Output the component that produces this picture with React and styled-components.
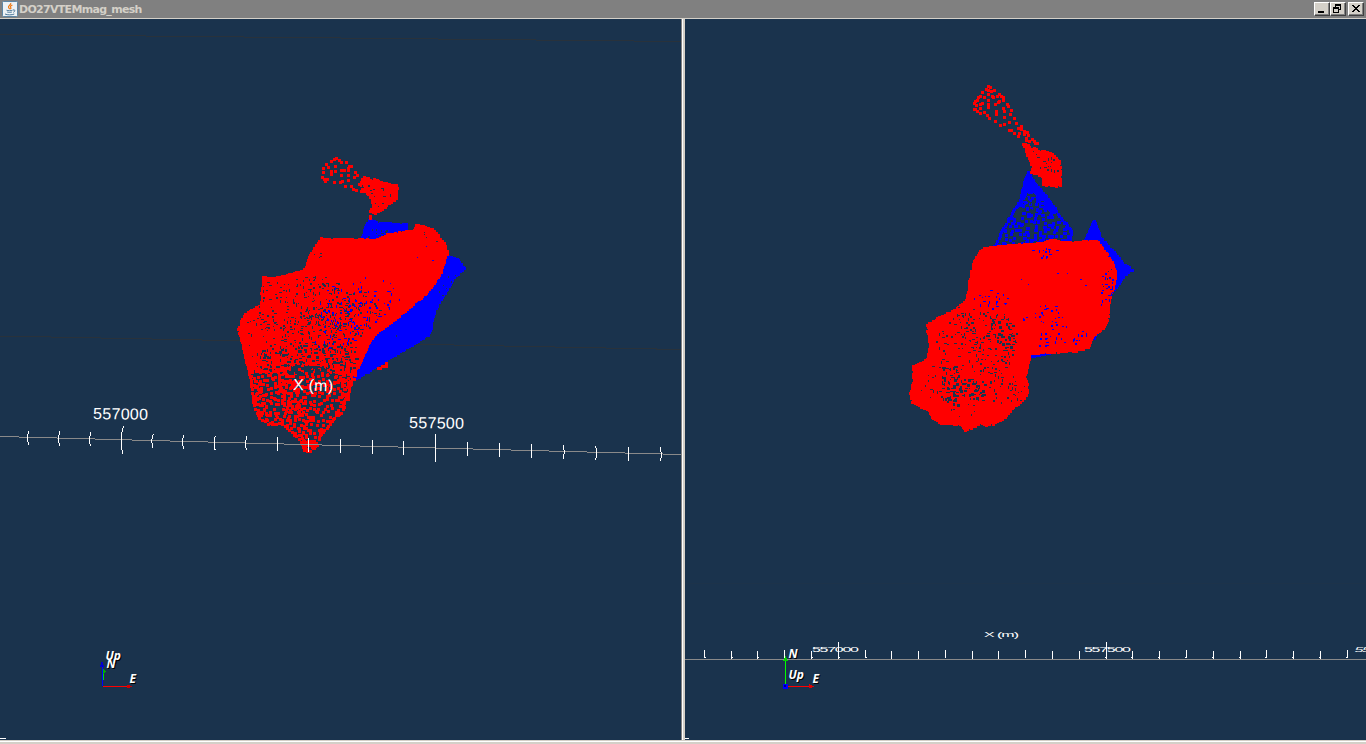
import React from 'react';
import styled, { createGlobalStyle } from 'styled-components';

const RED = '#ff0000';
const BLUE = '#0000ff';
const BACK = '#1a334d';

const Global = createGlobalStyle`
  html, body { margin: 0; padding: 0; }
  body { background: #d4d0c8; overflow: hidden; }
`;
const Window = styled.div`
  display: flex;
  flex-direction: column;
  width: 1366px;
  height: 744px;
  background: #d4d0c8;
`;
const TitleBar = styled.header`
  display: flex;
  align-items: center;
  height: 18px;
  box-sizing: border-box;
  padding: 0 2px;
  background: #808080;
`;
const AppIcon = styled.svg`
  width: 16px;
  height: 16px;
  flex: none;
`;
const Title = styled.span`
  flex: 1;
  padding: 1px 0 0 1px;
  font: bold 11px/17px 'DejaVu Sans', sans-serif;
  letter-spacing: ${(p) => p.$tracking}px;
  color: #d4d0c8;
`;
const Controls = styled.div`
  display: flex;
`;
const ControlButton = styled.button`
  width: 16px;
  height: 14px;
  padding: 0;
  margin-left: ${(p) => (p.$gap ? 2 : 0)}px;
  border: 1px solid;
  border-color: #fff #404040 #404040 #fff;
  box-shadow: inset -1px -1px 0 #808080;
  background: #d4d0c8;
  display: flex;
  svg { display: block; width: 14px; height: 12px; }
`;
const Split = styled.main`
  display: flex;
  height: 721px;
  margin-top: 1px;
`;
const Scene = styled.svg`
  display: block;
  width: 681px;
  height: 721px;
  background: ${BACK};
  flex: none;
`;
const Divider = styled.div`
  width: 4px;
  box-sizing: border-box;
  background: #d4d0c8;
  border-left: 1px solid #808080;
  box-shadow: inset 1px 0 0 #fff;
`;
const Footer = styled.div`
  height: 4px;
  box-sizing: border-box;
  border-top: 1px solid #d4d0c8;
  box-shadow: inset 0 1px 0 #fff;
`;
const AxisText = styled.text`
  font-family: 'Liberation Sans', sans-serif;
  font-size: 16px;
  fill: #fff;
`;
const CompassText = styled.text`
  font: italic bold 12px 'Open Sans', sans-serif;
  fill: #fff;
  text-shadow: 1px 1px 0 #000;
`;

// Outlines are stored in thirds of a pixel, relative to a local origin.
const local = (ox, oy, s) =>
  s.trim().split(/\s+/).map((p) => {
    const [x, y] = p.split(',').map(Number);
    return [ox + x / 3, oy + y / 3];
  });

const random = (seed) => () => {
  seed = (seed + 0x6d2b79f5) | 0;
  let t = Math.imul(seed ^ (seed >>> 15), 1 | seed);
  t = (t + Math.imul(t ^ (t >>> 7), 61 | t)) ^ t;
  return ((t ^ (t >>> 14)) >>> 0) / 4294967296;
};

const inside = (x, y, poly) => {
  let hit = false;
  for (let i = 0, j = poly.length - 1; i < poly.length; j = i++) {
    const [a, b] = poly[i];
    const [c, d] = poly[j];
    if (b > y !== d > y && x < ((c - a) * (y - b)) / (d - b) + a) hit = !hit;
  }
  return hit;
};

const square = (x, y, w, h = w) => `M${x} ${y}h${w}v${h}h${-w}z`;

// Vertices drawn as square points along and around an outline.
const edgePath = (poly, seed, gap = 2.6, open = false) => {
  const r = random(seed);
  let d = '';
  poly.forEach(([x, y], i) => {
    if (open && i === poly.length - 1) return;
    const [u, v] = poly[(i + 1) % poly.length];
    const n = Math.max(1, Math.round(Math.hypot(u - x, v - y) / gap));
    for (let k = 0; k < n; k++) {
      const px = x + ((u - x) * k) / n + (r() - 0.5);
      const py = y + ((v - y) * k) / n + (r() - 0.5);
      d += square(Math.floor(px) - 1, Math.floor(py) - 1, 3);
    }
  });
  return d;
};

// Jittered cells filling a polygon.
const scatter = (poly, { seed, step, chance, sizes }) => {
  const r = random(seed);
  const xs = poly.map((p) => p[0]);
  const ys = poly.map((p) => p[1]);
  let d = '';
  for (let y = Math.min(...ys); y < Math.max(...ys); y += step)
    for (let x = Math.min(...xs); x < Math.max(...xs); x += step) {
      const px = Math.round(x + r() * step * 0.8);
      const py = Math.round(y + r() * step * 0.8);
      const [w, h] = sizes[Math.floor(r() * sizes.length)];
      if (r() < chance && inside(px, py, poly)) d += square(px, py, w, h);
    }
  return d;
};

const Solid = ({ poly, color, seed = 1, edge = true }) => (
  <g fill={color}>
    <polygon points={poly.map((p) => p.join(',')).join(' ')} />
    {edge && <path d={edgePath(poly, seed)} />}
  </g>
);
const Points = ({ at, color }) => (
  <path fill={color} d={at.map(([x, y]) => square(Math.floor(x) - 1, Math.floor(y) - 1, 3)).join('')} />
);
const Speckle = ({ poly, color, ...opts }) => <path fill={color} d={scatter(poly, opts)} />;

const FINE = [[1, 1], [1, 2], [2, 1]];
const MID = [[1, 1], [1, 2], [2, 1], [2, 2], [1, 3], [3, 1]];
const COARSE = [[2, 2], [3, 1], [1, 3], [3, 2], [2, 3], [3, 3], [4, 2]];
const POINT = [[3, 3]];

const A = (s) => local(220, 140, s);
const B = (s) => local(220, 300, s);
const C = (s) => local(890, 70, s);
const D = (s) => local(890, 240, s);

const leftBody = [
  ...A('590,256 610,260 638,271 658,292 672,312 683,335 677,352 671,375 659,405 642,430 620,460 597,478 580,492'),
  ...B('550,38 503,76 466,103 445,132 425,180 404,220 350,218 320,195 230,190 180,215 90,215 79,180 64,115 56,90 69,58 84,38 103,28 126,14'),
  ...A('129,413 165,417 202,406 253,395 265,362 278,332 305,298 375,300 465,300 512,282 552,278 585,272'),
];
const leftFoot = B('84,205 180,205 230,185 320,185 350,210 406,210 402,228 388,265 377,300 364,338 346,350 326,374 306,398 294,420 284,438 272,450 256,452 243,425 217,398 187,370 145,370 119,356 104,318 96,260');
const leftFootRim = B('88,205 96,260 104,318 119,358 145,372 187,372 217,398 243,425 256,452 272,452 286,438 296,420 308,398 332,372 350,348 366,338 379,300 390,265 402,228');
const leftTail = A('350,55 335,65 342,58 358,60 320,73 310,84 325,82 345,80 310,97 333,95 347,94 308,112 312,118 322,118 316,125 333,104 343,127 363,105 360,128 368,124 385,105 376,139 386,122 395,138 400,148 408,152 403,112 411,105 405,97 395,80 388,80 378,68 363,66 386,84 386,92 365,90 372,90 418,133 424,154 452,230 452,236');
const leftHook = A('432,114 445,118 470,122 500,132 530,136 530,176 508,190 488,208 468,220 453,216 461,200 457,180 447,165 440,152 424,154 434,142 420,132');
const leftBlueTop = A('446,242 480,249 559,256 556,285 500,300 427,295 436,262');
const leftBlueSide = [...A('670,346 686,350 711,358 733,386 703,413 676,460 650,500'), ...B('654,10 638,55 628,106 616,111 548,152 498,182 412,236 400,230 440,100 590,0')];

const rightBody = D('285,26 310,23 350,18 420,13 450,11 490,2 550,10 610,3 626,8 635,22 653,46 669,75 678,101 674,130 662,165 655,200 653,240 640,266 610,286 595,323 560,333 480,337 422,342 412,375 404,410 414,450 409,468 390,487 365,508 345,532 309,553 290,555 270,550 228,573 217,555 155,550 130,537 118,512 68,486 61,460 71,430 71,380 113,359 120,320 113,257 150,233 195,211 231,183 243,110 253,65 272,34');
const rightTail = C('295,50 290,57 302,52 296,61 277,68 305,64 314,62 265,82 271,79 283,82 295,73 307,79 311,83 328,73 321,79 333,79 340,82 340,91 262,91 256,95 253,101 259,107 271,103 277,100 295,91 295,103 295,112 316,103 325,97 329,94 352,103 355,109 364,121 340,115 344,125 361,133 253,119 256,117 262,125 271,115 271,130 283,127 292,136 298,145 319,125 319,133 316,154 331,166 343,142 343,163 358,157 373,145 379,160 358,181 364,181 373,190 385,199 385,175 394,170 394,178 388,190 403,184 403,193 412,187 415,196 409,205 409,211 418,214 427,208 434,214 442,220 436,220 434,235');
const rightHook = C('401,223 415,226 420,240 434,238 448,243 465,245 488,256 509,275 511,346 500,348 460,343 457,318 440,311 424,308 430,290 418,265 407,240');
const rightBlueTop = C('416,310 425,325 440,347 470,382 496,416 508,440 530,462 545,485 540,510 543,530 315,530 326,508 338,482 353,457 367,432 387,402 398,370 406,330');
const rightPeak = C('612,452 620,472 630,498 640,516 660,538 580,525 600,485');
const rightBlueSide = D('630,4 645,8 662,26 698,70 726,90 702,106 688,131 673,150 660,60');

const Tick = ({ x, major }) => {
  const y = 437 + x * 0.0264;
  const h = major ? 14 : 7;
  const b = x < 270 ? 1.5 + (major ? 1 : 0) : x > 550 ? -1 : 0;
  return <path fill="none" stroke="#fff" d={`M${x + b} ${y - h}L${x} ${y - h / 4}V${y + h / 4}L${x + b * 0.7} ${y + h}`} />;
};
const leftTicks = [27.5, 58.5, 89.5, 121, 151.9, 182.5, 214, 245.5, 277.5, 308.5, 340.5, 372.5, 403.5, 435.5, 467.5, 499.5, 531.5, 564, 596.5, 628.9, 661.2];

const Compass = ({ children }) => <g>{children}</g>;

const LeftScene = () => (
  <Scene viewBox="0 19 681 721" shapeRendering="crispEdges">
    <path d="M0 34.5L681 41.5M0 336L681 349.5" stroke="#29323b" fill="none" />
    <Solid poly={leftBlueTop} color={BLUE} seed={4} />
    <Speckle poly={A('455,263 550,265 535,280 470,300 435,290')} color={BACK} seed={7} step={3} chance={0.7} sizes={MID} />
    <Solid poly={leftBlueSide} color={BLUE} seed={5} />
    <Speckle poly={A('685,390 708,405 665,475 640,460')} color={BACK} seed={8} step={4} chance={0.45} sizes={FINE} />
    <Speckle poly={B('490,105 600,88 600,105 500,120')} color={BACK} seed={8} step={4} chance={0.25} sizes={FINE} />
    <Points at={B('475,204 482,204 488,200 494,198 500,198 500,190')} color={RED} />
    <Solid poly={leftBody} color={RED} seed={2} />
    <Speckle poly={leftFoot} color={RED} seed={71} step={4} chance={0.82} sizes={POINT} />
    <path d={edgePath(leftFootRim, 72, 3.2, true)} fill={RED} />
    <Speckle poly={B('88,205 112,205 125,300 150,372 119,356 104,318')} color={RED} seed={73} step={3.2} chance={0.6} sizes={POINT} />
    <Speckle poly={B('140,205 215,205 245,340 290,430 272,450 256,452 200,350')} color={RED} seed={74} step={3.2} chance={0.6} sizes={POINT} />
    <Speckle poly={B('320,205 404,205 380,300 364,338 345,260')} color={RED} seed={75} step={3.2} chance={0.5} sizes={POINT} />
    <Speckle poly={A('132,425 245,405 330,410 430,450 490,520 410,600 300,600 95,550')} color={BACK} seed={21} step={3.3} chance={0.34} sizes={MID} />
    <Speckle poly={A('265,430 330,430 390,470 380,560 310,570 250,510')} color={BACK} seed={22} step={3.5} chance={0.48} sizes={MID} />
    <Speckle poly={B('75,65 130,45 310,40 410,60 405,180 340,220 120,215 90,180')} color={BACK} seed={23} step={3.4} chance={0.38} sizes={MID} />
    <Speckle poly={B('115,145 350,120 400,165 385,215 100,215')} color={BACK} seed={24} step={3.9} chance={0.5} sizes={COARSE} />
    <Speckle poly={B('385,125 415,130 410,180 385,230')} color={BACK} seed={27} step={4} chance={0.6} sizes={COARSE} />
    <Speckle poly={A('320,430 430,400 520,430 550,500 430,560 395,620 315,650 290,530')} color={BLUE} seed={31} step={4} chance={0.27} sizes={MID} />
    <Speckle poly={B('300,0 530,0 480,75 420,130 340,130 270,170 290,60')} color={BLUE} seed={32} step={4} chance={0.27} sizes={MID} />
    <Speckle poly={A('455,310 550,295 665,320 650,370 500,350')} color={BLUE} seed={33} step={7} chance={0.2} sizes={FINE} />
    <Speckle poly={A('275,340 305,335 300,370 275,365')} color={BACK} seed={34} step={4} chance={0.45} sizes={FINE} />
    <Speckle poly={A('600,265 650,285 670,325 640,325')} color={BACK} seed={36} step={5} chance={0.35} sizes={FINE} />
    <Points at={leftTail} color={RED} />
    <Solid poly={leftHook} color={RED} seed={6} />
    <Speckle poly={A('425,120 510,140 515,170 480,205 460,190 445,160 420,150')} color={BACK} seed={35} step={3.6} chance={0.34} sizes={MID} />
    <path d="M0 436.5L681 454.5" stroke="#8a8a8a" fill="none" />
    {leftTicks.map((x) => <Tick key={x} x={x} major={x === 121 || x === 435.5} />)}
    <AxisText x="93" y="419" textLength="55" transform="rotate(0.8 93 419)">557000</AxisText>
    <AxisText x="409" y="428" textLength="55" transform="rotate(0.8 409 428)">557500</AxisText>
    <AxisText x="293" y="390" textLength="40" transform="rotate(1.8 293 390)">X (m)</AxisText>
    <Compass>
      <path d="M103.5 671V680" stroke="#00e000" />
      <path d="M103 669l3 3-3 2z" fill="#00b000" />
      <path d="M102.5 664V686" stroke={BLUE} />
      <path d="M102 661l2.5 6h-5z" fill="#0000d0" />
      <path d="M103 686.5H128" stroke={RED} />
      <path d="M127 684.5l5 2-5 2z" fill="#d00000" />
      <CompassText x="105.5" y="660">Up</CompassText>
      <CompassText x="106.5" y="668">N</CompassText>
      <CompassText x="129.5" y="683">E</CompassText>
    </Compass>
    <path d="M0 738.5H6" stroke="#fff" />
  </Scene>
);

const rightTicks = Array.from({ length: 25 }, (_, i) => Math.floor(704.4 + i * 26.78));

const RightScene = () => (
  <Scene viewBox="685 19 681 721" shapeRendering="crispEdges">
    <path d="M685 583.5H1366" stroke="#1d334a" />
    <Speckle poly={rightBlueTop} color={BLUE} seed={41} step={4.2} chance={0.76} sizes={[[3, 3], [3, 3], [3, 4], [4, 3]]} />
    <path d={edgePath(rightBlueTop, 3)} fill={BLUE} />
    <Solid poly={C('415,312 440,348 480,395 493,428 455,410 440,375 415,350 395,395 387,408 400,365')} color={BLUE} seed={9} />
    <Speckle poly={C('400,355 470,385 480,420 390,420')} color={BACK} seed={42} step={4} chance={0.5} sizes={MID} />
    <Solid poly={rightPeak} color={BLUE} seed={10} />
    <Solid poly={rightBlueSide} color={BLUE} seed={11} />
    <Solid poly={D('422,340 490,336 480,340 440,348 424,349')} color={BLUE} seed={12} />
    <Solid poly={D('610,285 620,282 614,295')} color={BLUE} seed={13} />
    <Solid poly={rightBody} color={RED} seed={14} />
    <Speckle poly={D('200,200 350,215 390,280 380,330 330,410 290,400 230,320 190,250')} color={BACK} seed={51} step={3.6} chance={0.4} sizes={MID} />
    <Speckle poly={D('130,250 230,210 280,280 290,370 400,410 395,480 330,490 180,510 90,450 130,370')} color={BACK} seed={52} step={3.6} chance={0.28} sizes={MID} />
    <Speckle poly={D('155,375 190,370 210,410 310,420 300,455 200,495 150,475')} color={BACK} seed={53} step={3.8} chance={0.64} sizes={COARSE} />
    <Speckle poly={D('290,240 345,220 385,270 385,315 340,330 265,320')} color={BACK} seed={54} step={3.6} chance={0.42} sizes={COARSE} />
    <Speckle poly={D('350,410 405,415 405,465 360,475')} color={BACK} seed={55} step={4} chance={0.34} sizes={MID} />
    <Speckle poly={D('90,400 150,490 330,470 340,510 200,540 110,480')} color={BACK} seed={56} step={5} chance={0.25} sizes={FINE} />
    <Speckle poly={D('260,55 290,50 295,95 260,100')} color={BACK} seed={57} step={5} chance={0.4} sizes={FINE} />
    <Speckle poly={D('240,180 290,145 355,165 355,200 300,205')} color={BLUE} seed={61} step={3.5} chance={0.5} sizes={MID} />
    <Speckle poly={D('420,25 500,18 505,50 460,58 425,40')} color={BLUE} seed={62} step={3.5} chance={0.5} sizes={MID} />
    <Speckle poly={D('440,190 500,190 530,240 525,320 445,315 430,240 395,240 395,225 430,225')} color={BLUE} seed={63} step={4} chance={0.42} sizes={MID} />
    <Speckle poly={D('545,280 590,275 590,310 550,320')} color={BLUE} seed={64} step={3.5} chance={0.5} sizes={MID} />
    <Speckle poly={D('630,85 670,85 675,130 655,195 632,195')} color={BLUE} seed={65} step={3.8} chance={0.58} sizes={MID} />
    <Speckle poly={D('635,90 670,85 670,135 635,155')} color={BACK} seed={66} step={4} chance={0.3} sizes={FINE} />
    <Speckle poly={D('350,70 600,70 600,280 390,320')} color={BLUE} seed={67} step={9} chance={0.12} sizes={FINE} />
    <Points at={rightTail} color={RED} />
    <Solid poly={rightHook} color={RED} seed={15} />
    <Speckle poly={C('405,225 430,240 485,255 502,300 455,308 435,270')} color={BACK} seed={68} step={3.4} chance={0.48} sizes={MID} />
    <path d="M685 659.5H1366" stroke="#8a8a8a" />
    {rightTicks.map((x, i) => (
      <path key={x} fill="#fff" d={square(x, i === 5 || i === 15 ? 642 : i % 3 ? 651 : 650, 1, i === 5 || i === 15 ? 17 : 8) + (i < 7 ? square(x + 1, 657, 1) : i > 14 ? square(x - 1, 657, 1) : '')} />
    ))}
    <AxisText textLength="47" transform="translate(812 651.5) scale(1 .43)">557000</AxisText>
    <AxisText textLength="47" transform="translate(1084 651.5) scale(1 .43)">557500</AxisText>
    <AxisText textLength="47" transform="translate(1354 651.5) skewX(-20) scale(1 .43)">558000</AxisText>
    <AxisText textLength="35" transform="translate(984 637) scale(1 .43)">X (m)</AxisText>
    <Compass>
      <path d="M785.5 659V685" stroke="#00ff00" />
      <path d="M785.5 656l2.5 5h-5z" fill="#00d000" />
      <path d="M786 686.5H810" stroke={RED} />
      <path d="M809 684l5 2.5-5 2z" fill="#e00000" />
      <rect x="783" y="684" width="5" height="5" fill={BLUE} />
      <rect x="784" y="685" width="2" height="2" fill="#000080" />
      <CompassText x="788.5" y="658">N</CompassText>
      <CompassText x="788.5" y="679">Up</CompassText>
      <CompassText x="812.5" y="683">E</CompassText>
    </Compass>
    <path d="M685 738.5H689" stroke="#fff" />
  </Scene>
);

export default function App() {
  return (
    <Window>
      <Global />
      <TitleBar>
        <AppIcon viewBox="0 0 16 16">
          <rect x="0.5" y="0.5" width="15" height="15" rx="1" fill="#edf2f5" stroke="#5d86a5" />
          <path d="M8.7 2c1 1.7-3 2.6-2.2 4.3.3.7 1 1 1.1 1.8M10.4 4c-1.7.8-2.5 1.4-1.6 2.5.5.7 0 1.2-.5 1.6" fill="none" stroke="#f07a13" strokeWidth="1.2" />
          <path d="M4.5 9.2c1.6.7 4.5.6 6 0M5.2 11c1.4.5 3.3.5 4.7 0M3 13c2.5 1.2 7 1.1 9.3 0M11 9c2.5-.8 2.3 1.8.3 2.3" fill="none" stroke="#4c7899" />
        </AppIcon>
        <Title $tracking={-0.7}>DO27VTEMmag_mesh</Title>
        <Controls>
          <ControlButton aria-label="Minimize">
            <svg viewBox="0 0 14 12" shapeRendering="crispEdges"><path d="M3 8h6v2H3z" /></svg>
          </ControlButton>
          <ControlButton aria-label="Restore">
            <svg viewBox="0 0 14 12" shapeRendering="crispEdges">
              <path d="M4 1h6v6H8V6h1V3H5v1H4zM2 4h6v6H2zM3 6v3h4V6z" fillRule="evenodd" />
            </svg>
          </ControlButton>
          <ControlButton $gap aria-label="Close">
            <svg viewBox="0 0 14 12" shapeRendering="crispEdges">
              <path d="M3 2h2v1h1v1h2V3h1V2h2v1h-1v1H9v1H8v1h1v1h1v1h1v1H9V8H8V7H6v1H5v1H3V8h1V7h1V6h1V5H5V4H4V3H3z" />
            </svg>
          </ControlButton>
        </Controls>
      </TitleBar>
      <Split>
        <LeftScene />
        <Divider />
        <RightScene />
      </Split>
      <Footer />
    </Window>
  );
}
